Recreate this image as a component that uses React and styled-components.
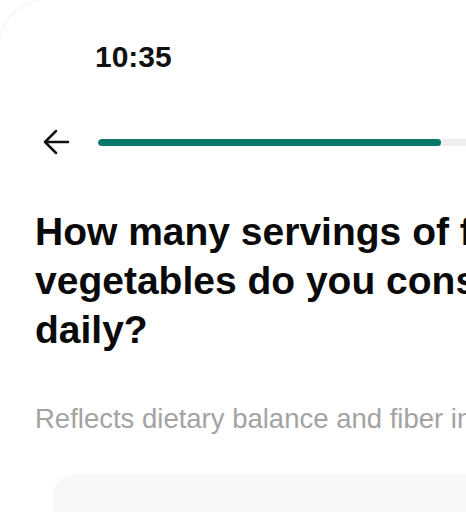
import styled, { createGlobalStyle } from "styled-components";

const GlobalStyle = createGlobalStyle`
  html, body {
    margin: 0;
    padding: 0;
    background: #ffffff;
    overflow: hidden;
  }
  body {
    font-family: "Liberation Sans", Arial, sans-serif;
    color: #0a0a0a;
  }
`;

// 폰 화면 (오른쪽은 잘려 보임)
const Screen = styled.div`
  width: 580px;
  min-height: 560px;
  border-top: 1px solid #f3f3f3;
  border-left: 1px solid #f3f3f3;
  border-top-left-radius: 46px;
  margin: -1px 0 0 -1px;
  background: #ffffff;
  overflow: hidden;
`;

const StatusBar = styled.div`
  padding: 39px 0 0 95px;
  height: 36px;
  font-size: 30px;
  line-height: 36px;
  font-weight: 700;
  color: #111111;
`;

const NavRow = styled.div`
  display: flex;
  align-items: center;
  gap: 28px;
  margin-top: 53px;
  padding-left: 42px;
  height: 28px;
`;

const BackButton = styled.button`
  display: flex;
  align-items: center;
  justify-content: center;
  width: 28px;
  height: 28px;
  padding: 0;
  border: none;
  background: none;
  color: #111111;
`;

const Track = styled.div`
  flex: 1;
  height: 7px;
  border-radius: 4px;
  background: #eeeeee;
  overflow: hidden;
`;

const Fill = styled.div`
  width: ${(props) => props.$width}px;
  height: 100%;
  border-radius: 4px;
  background: #097868;
`;

const Content = styled.div`
  padding-left: 35px;
`;

const Title = styled.h1`
  margin: 51px 0 0;
  font-size: 39px;
  line-height: 49px;
  font-weight: 700;
  white-space: nowrap;
  color: #0a0a0a;
`;

const Subtitle = styled.p`
  margin: 48px 0 0;
  font-size: 27.5px;
  line-height: 34px;
  color: #a3a3a3;
  white-space: nowrap;
`;

const OptionCard = styled.div`
  margin: 38px 0 0 18px;
  height: 120px;
  border-radius: 22px;
  background: #f8f8f8;
`;

function BackArrow() {
  return (
    <svg width="28" height="28" viewBox="0 0 28 28" fill="none">
      <path
        d="M26 14H3M14 3L3 14l11 11"
        stroke="currentColor"
        strokeWidth="2.5"
        strokeLinecap="round"
        strokeLinejoin="round"
      />
    </svg>
  );
}

export default function App() {
  return (
    <>
      <GlobalStyle />
      <Screen>
        <StatusBar>10:35</StatusBar>
        <NavRow>
          <BackButton aria-label="Back">
            <BackArrow />
          </BackButton>
          <Track>
            <Fill $width={343} />
          </Track>
        </NavRow>
        <Content>
          <Title>
            How many servings of fruits and
            <br />
            vegetables do you consume
            <br />
            daily?
          </Title>
          <Subtitle>Reflects dietary balance and fiber intake.</Subtitle>
          <OptionCard />
        </Content>
      </Screen>
    </>
  );
}
